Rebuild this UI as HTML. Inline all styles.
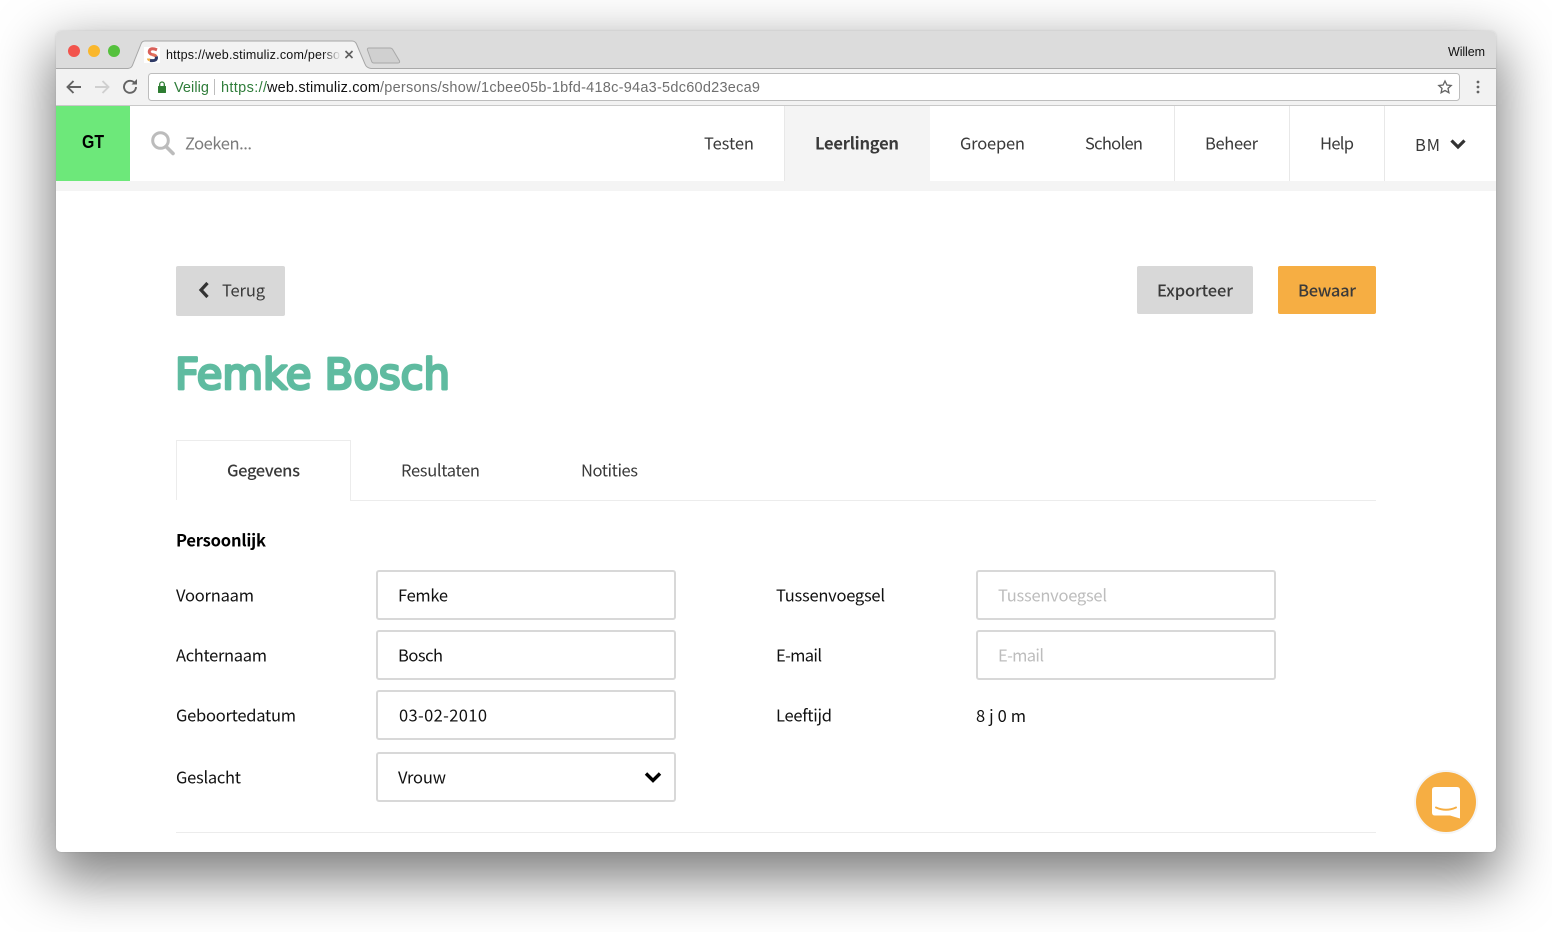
<!DOCTYPE html>
<html lang="nl">
<head>
<meta charset="utf-8">
<title>Femke Bosch</title>
<style>
html,body{margin:0;padding:0;width:1552px;height:932px;overflow:hidden;background:#fff}
.win{position:absolute;left:56px;top:31px;width:1440px;height:821px;background:#fff;border-radius:5px;box-shadow:0 22px 55px 6px rgba(0,0,0,.5),0 0 2px rgba(0,0,0,.12)}
svg{position:absolute;left:0;top:0}
text{white-space:pre}
.o{font-family:"Noto Sans CJK JP","Liberation Sans",sans-serif;font-size:16.500px;fill:#111}
.n{fill:#3a3a3a}
.b{font-weight:700}
.m{font-weight:500}
.h{font-family:"Liberation Sans",sans-serif}
.p{fill:#bdbdbd}
</style>
</head>
<body>
<div class="win"></div>
<svg width="1552" height="932" viewBox="0 0 1552 932" xmlns="http://www.w3.org/2000/svg">
<defs>
<linearGradient id="fade" x1="0" x2="1"><stop offset="0" stop-color="#f2f2f2" stop-opacity="0"/><stop offset="1" stop-color="#f2f2f2"/></linearGradient>
</defs>
<!-- browser chrome -->
<path d="M56 69V36a5 5 0 0 1 5-5H1491a5 5 0 0 1 5 5V69z" fill="#dcdcdc"/>
<rect x="56" y="68" width="1440" height="1" fill="#a9a9a9"/>
<rect x="56" y="69" width="1440" height="36" fill="#f2f2f2"/>
<rect x="56" y="105" width="1440" height="1" fill="#c9c9c9"/>
<circle cx="74" cy="51" r="6" fill="#f2544d"/><circle cx="94" cy="51" r="6" fill="#fab72c"/><circle cx="114" cy="51" r="6" fill="#55c13d"/>
<path d="M128 68.500C131 68 132 67 133 64L141 44Q142 41 145 41H352Q355 41 356.500 44L365 64C366 67 368 68 371 68.500V70H128z" fill="#f2f2f2"/>
<path d="M128 68.500C131 68 132 67 133 64L141 44Q142 41 145 41H352Q355 41 356.500 44L365 64C366 67 368 68 371 68.500" fill="none" stroke="#a6a6a6"/>
<path d="M367.500 50Q367 48 369 48H390Q392 48 393 50L399.500 61Q400 63 398 63H374Q372 63 371.500 61z" fill="#d0d0d0" stroke="#a9a9a9"/>
<!-- favicon -->
<rect x="144" y="47" width="16" height="16" fill="#fff"/>
<path d="M157 49.800Q151 47.500 149.500 50.500Q148.500 53.500 152 54.500" fill="none" stroke="#d9605a" stroke-width="3"/>
<path d="M152 54.500Q155 55 156.300 56.500" fill="none" stroke="#e2705a" stroke-width="3"/>
<path d="M148.500 58.500Q148.500 59.500 150 60" fill="none" stroke="#f0ad3e" stroke-width="3"/>
<path d="M156.300 56.500Q157.500 61.500 150 60.500" fill="none" stroke="#2f3a66" stroke-width="3"/>
<text class="h" x="166" y="59" font-size="12.500" fill="#111" textLength="174" lengthAdjust="spacing">https://web.stimuliz.com/perso</text>
<rect x="322" y="46" width="19" height="16" fill="url(#fade)"/>
<path d="M345.500 51l7 7m0-7l-7 7" stroke="#5f5f5f" stroke-width="1.600" fill="none"/>
<text class="h" x="1448" y="56" font-size="12.500" fill="#111" textLength="37" lengthAdjust="spacing">Willem</text>
<!-- toolbar icons -->
<path d="M81 87H68M73.500 81L67.500 87L73.500 93" fill="none" stroke="#636363" stroke-width="1.900"/>
<path d="M95 87H108M102.500 81L108.500 87L102.500 93" fill="none" stroke="#cfcfcf" stroke-width="1.900"/>
<path d="M135 83.500A6 6 0 1 0 136 87" fill="none" stroke="#636363" stroke-width="1.900"/>
<path d="M131.500 84.500H137V79z" fill="#636363"/>
<rect x="148.500" y="73.500" width="1311" height="27" rx="3" fill="#fff" stroke="#bdbdbd"/>
<rect x="158" y="86" width="8" height="7" fill="#2e7d32" rx=".5"/>
<path d="M159.700 86V84.300a2.300 2.300 0 0 1 4.600 0V86" fill="none" stroke="#2e7d32" stroke-width="1.300"/>
<text class="h" x="174" y="92" font-size="14.500" fill="#2f7d3a" textLength="35" lengthAdjust="spacing">Veilig</text>
<rect x="214" y="79" width="1" height="16" fill="#bdbdbd"/>
<text class="h" x="221" y="92" font-size="14.500" fill="#2f7d3a" textLength="46" lengthAdjust="spacing">https://</text>
<text class="h" x="267" y="92" font-size="14.500" fill="#111" textLength="113" lengthAdjust="spacing">web.stimuliz.com</text>
<text class="h" x="380" y="92" font-size="14.500" fill="#6f6f6f" textLength="380" lengthAdjust="spacing">/persons/show/1cbee05b-1bfd-418c-94a3-5dc60d23eca9</text>
<path d="M1445 81l1.900 4 4.300.5-3.200 2.900.9 4.300-3.900-2.200-3.900 2.200.9-4.300-3.200-2.900 4.300-.5z" fill="none" stroke="#636363" stroke-width="1.300"/>
<circle cx="1478" cy="82" r="1.400" fill="#636363"/><circle cx="1478" cy="87" r="1.400" fill="#636363"/><circle cx="1478" cy="92" r="1.400" fill="#636363"/>
<!-- app nav -->
<rect x="56" y="106" width="74" height="75" fill="#6de87a"/>
<rect x="56" y="181" width="1440" height="10" fill="#f4f4f4"/>
<rect x="785" y="106" width="145" height="75" fill="#f4f4f4"/>
<rect x="784" y="106" width="1" height="75" fill="#e8e8e8"/>
<rect x="1174" y="106" width="1" height="75" fill="#e8e8e8"/>
<rect x="1289" y="106" width="1" height="75" fill="#e8e8e8"/>
<rect x="1384" y="106" width="1" height="75" fill="#e8e8e8"/>
<text class="h" x="82" y="148" font-size="18" font-weight="700" fill="#000" textLength="22" lengthAdjust="spacingAndGlyphs">GT</text>
<circle cx="160.500" cy="140.500" r="7.800" fill="none" stroke="#bcbcbc" stroke-width="3"/>
<path d="M166 146.500L173 153.500" stroke="#bcbcbc" stroke-width="3.600" stroke-linecap="round"/>
<text class="o" x="185" y="149.500" style="fill:#7b7b7b" textLength="67">Zoeken...</text>
<text class="o n" x="704" y="149.500" textLength="50">Testen</text>
<text class="o n b" x="815" y="149.500" textLength="84">Leerlingen</text>
<text class="o n" x="960" y="149.500" textLength="65">Groepen</text>
<text class="o n" x="1085" y="149.500" textLength="58">Scholen</text>
<text class="o n" x="1205" y="149.500" textLength="53">Beheer</text>
<text class="o n" x="1320" y="149.500" textLength="34">Help</text>
<text class="o n" x="1415" y="151" textLength="25">BM</text>
<path d="M1451.500 140.500L1458 147L1464.500 140.500" fill="none" stroke="#333" stroke-width="3.200"/>
<!-- buttons -->
<rect x="176" y="266" width="109" height="50" rx="2" fill="#d8d8d8"/>
<path d="M207.500 283L201 290L207.500 297" fill="none" stroke="#333" stroke-width="3.200"/>
<text class="o n" x="222" y="296.500" textLength="43">Terug</text>
<rect x="1137" y="266" width="116" height="48" rx="2" fill="#d8d8d8"/>
<text class="o n m" x="1157" y="296.500" textLength="76">Exporteer</text>
<rect x="1278" y="266" width="98" height="48" rx="2" fill="#f6ae43"/>
<text class="o n m" x="1298" y="296.500" textLength="58">Bewaar</text>
<!-- title -->
<text x="175" y="389" font-family="'DejaVu Sans',sans-serif" font-size="43" fill="#5fbba0" stroke="#5fbba0" stroke-width="2.800" stroke-linejoin="round" textLength="275" lengthAdjust="spacingAndGlyphs">Femke Bosch</text>
<!-- tabs -->
<path d="M176.500 500V440.500H350.500V500.500H1376" fill="none" stroke="#ececec"/>
<text class="o n m" x="227" y="476.500" textLength="73">Gegevens</text>
<text class="o n" x="401" y="476.500" textLength="79">Resultaten</text>
<text class="o n" x="581" y="476.500" textLength="57">Notities</text>
<text class="o b" x="176" y="546.500" style="fill:#000" textLength="90">Persoonlijk</text>
<!-- form left -->
<text class="o" x="176" y="601.500" textLength="78">Voornaam</text>
<rect x="377" y="571" width="298" height="48" rx="2" fill="#fff" stroke="#d8d8d8" stroke-width="2"/>
<text class="o" x="398" y="601.500" textLength="50">Femke</text>
<text class="o" x="176" y="661.500" textLength="91">Achternaam</text>
<rect x="377" y="631" width="298" height="48" rx="2" fill="#fff" stroke="#d8d8d8" stroke-width="2"/>
<text class="o" x="398" y="661.500" textLength="45">Bosch</text>
<text class="o" x="176" y="721.500" textLength="120">Geboortedatum</text>
<rect x="377" y="691" width="298" height="48" rx="2" fill="#fff" stroke="#d8d8d8" stroke-width="2"/>
<text class="o" x="399" y="721.500" textLength="88">03-02-2010</text>
<text class="o" x="176" y="783.500" textLength="65">Geslacht</text>
<rect x="377" y="753" width="298" height="48" rx="2" fill="#fff" stroke="#d8d8d8" stroke-width="2"/>
<text class="o" x="398" y="783.500" textLength="48">Vrouw</text>
<path d="M646 773.500L653 780.500L660 773.500" fill="none" stroke="#000" stroke-width="3.400"/>
<!-- form right -->
<text class="o" x="776" y="601.500" textLength="109">Tussenvoegsel</text>
<rect x="977" y="571" width="298" height="48" rx="2" fill="#fff" stroke="#d8d8d8" stroke-width="2"/>
<text class="o p" x="998" y="601.500" style="fill:#bdbdbd" textLength="109">Tussenvoegsel</text>
<text class="o" x="776" y="661.500" textLength="46">E-mail</text>
<rect x="977" y="631" width="298" height="48" rx="2" fill="#fff" stroke="#d8d8d8" stroke-width="2"/>
<text class="o p" x="998" y="661.500" style="fill:#bdbdbd" textLength="46">E-mail</text>
<text class="o" x="776" y="721.500" textLength="56">Leeftijd</text>
<text class="o" x="976" y="722" textLength="50">8 j 0 m</text>
<rect x="176" y="832" width="1200" height="1" fill="#ececec"/>
<!-- chat -->
<circle cx="1446" cy="802" r="32" fill="#000" opacity=".04"/>
<circle cx="1446" cy="802" r="30" fill="#f6ae43"/>
<path d="M1435 787H1457Q1460 787 1460 790V818.500L1450 815.500H1435Q1432 815.500 1432 812.500V790Q1432 787 1435 787z" fill="#fff"/>
<path d="M1436 807.500Q1446 812 1456 807.500" fill="none" stroke="#f6ae43" stroke-width="2" stroke-linecap="round"/>
</svg>
</body>
</html>
